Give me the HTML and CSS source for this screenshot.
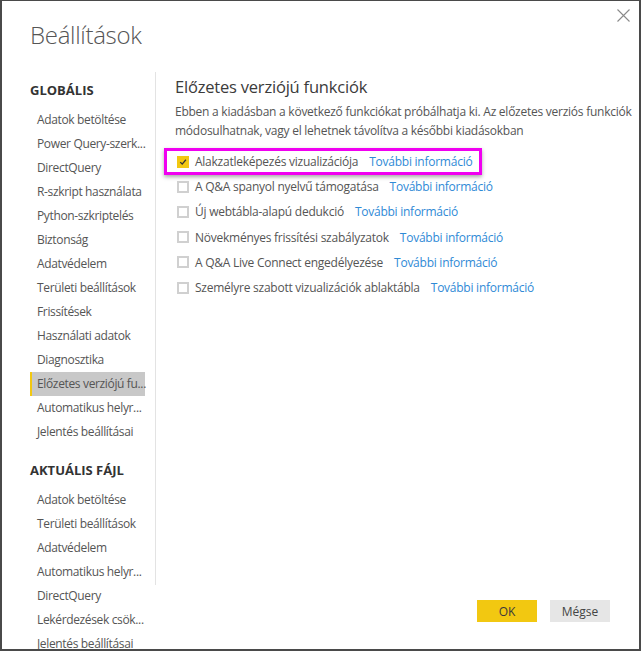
FILE: index.html
```html
<!DOCTYPE html>
<html lang="hu">
<head>
<meta charset="utf-8">
<title>Beállítások</title>
<link rel="stylesheet" href="styles.css">
</head>
<body>
<div class="dialog">
  <div class="header">
    <h1 class="title">Beállítások</h1>
    <button class="close" aria-label="Bezárás">
      <svg width="13" height="13" viewBox="0 0 13 13"><path d="M0.5 0.5 L12.5 12.5 M12.5 0.5 L0.5 12.5" stroke="#8a8a8a" stroke-width="1.1" fill="none"/></svg>
    </button>
  </div>
  <div class="main">
    <nav class="nav">
      <div class="nav-head">GLOBÁLIS</div>
      <div class="nav-item">Adatok betöltése</div>
      <div class="nav-item">Power Query-szerk...</div>
      <div class="nav-item">DirectQuery</div>
      <div class="nav-item">R-szkript használata</div>
      <div class="nav-item">Python-szkriptelés</div>
      <div class="nav-item">Biztonság</div>
      <div class="nav-item">Adatvédelem</div>
      <div class="nav-item">Területi beállítások</div>
      <div class="nav-item">Frissítések</div>
      <div class="nav-item">Használati adatok</div>
      <div class="nav-item">Diagnosztika</div>
      <div class="nav-item selected">Előzetes verziójú fu...</div>
      <div class="nav-item">Automatikus helyr...</div>
      <div class="nav-item">Jelentés beállításai</div>
      <div class="nav-head second">AKTUÁLIS FÁJL</div>
      <div class="nav-item">Adatok betöltése</div>
      <div class="nav-item">Területi beállítások</div>
      <div class="nav-item">Adatvédelem</div>
      <div class="nav-item">Automatikus helyr...</div>
      <div class="nav-item">DirectQuery</div>
      <div class="nav-item">Lekérdezések csök...</div>
      <div class="nav-item">Jelentés beállításai</div>
    </nav>
    <div class="right">
      <section class="content">
        <h2 class="content-title">Előzetes verziójú funkciók</h2>
        <p class="desc">Ebben a kiadásban a következő funkciókat próbálhatja ki. Az előzetes verziós funkciók módosulhatnak, vagy el lehetnek távolítva a későbbi kiadásokban</p>
        <div class="row">
          <span class="box checked"><svg width="10" height="10" viewBox="0 0 10 10"><path d="M1.5 5.2 L4 7.6 L8.6 2.2" stroke="#333" stroke-width="1.6" fill="none"/></svg></span>
          <span class="label">Alakzatleképezés vizualizációja</span>
          <a class="link" href="#">További információ</a>
          <span class="mark"></span>
        </div>
        <div class="row">
          <span class="box"></span>
          <span class="label">A Q&amp;A spanyol nyelvű támogatása</span>
          <a class="link" href="#">További információ</a>
        </div>
        <div class="row">
          <span class="box"></span>
          <span class="label">Új webtábla-alapú dedukció</span>
          <a class="link" href="#">További információ</a>
        </div>
        <div class="row">
          <span class="box"></span>
          <span class="label">Növekményes frissítési szabályzatok</span>
          <a class="link" href="#">További információ</a>
        </div>
        <div class="row">
          <span class="box"></span>
          <span class="label">A Q&amp;A Live Connect engedélyezése</span>
          <a class="link" href="#">További információ</a>
        </div>
        <div class="row">
          <span class="box"></span>
          <span class="label">Személyre szabott vizualizációk ablaktábla</span>
          <a class="link" href="#">További információ</a>
        </div>
      </section>
      <div class="footer">
        <button class="btn primary">OK</button>
        <button class="btn">Mégse</button>
      </div>
    </div>
  </div>
</div>
</body>
</html>
```

FILE: styles.css
```css
* { box-sizing: border-box; }
html, body { margin: 0; padding: 0; background: #fff; }
body { font-family: "Open Sans", "Noto Sans", sans-serif; color: #444; }

.dialog {
  width: 641px;
  height: 651px;
  border: 2px solid #4a4a4a;
  border-top-width: 1px;
  background: #fff;
  display: flex;
  flex-direction: column;
  overflow: hidden;
}

.header {
  height: 71px;
  flex: none;
  position: relative;
  display: flex;
  align-items: flex-start;
}
.title {
  margin: 15px 0 0 28px;
  font-size: 24px;
  font-weight: 300;
  color: #555;
  line-height: 38px;
  letter-spacing: -0.3px;
}
.close {
  position: absolute;
  right: 9px;
  top: 8px;
  border: 0;
  background: none;
  padding: 0;
  width: 13px;
  height: 13px;
  display: flex;
}

.main {
  flex: 1;
  display: flex;
  min-height: 0;
}

.nav {
  width: 153px;
  flex: none;
  padding: 6px 0 0 28px;
  overflow: hidden;
}
.nav-head {
  font-size: 13px;
  font-weight: 700;
  color: #333;
  line-height: 24px;
  margin-bottom: 6px;
}
.nav-head.second { margin-top: 14px; }
.nav-item {
  height: 24px;
  line-height: 24px;
  font-size: 12px;
  color: #555;
  padding-left: 7px;
  width: 115px;
  white-space: nowrap;
  letter-spacing: -0.35px;
}
.nav-item.selected {
  background: #c8c8c8;
  border-left: 2px solid #f2c811;
  padding-left: 5px;
}

.right {
  flex: 1;
  display: flex;
  flex-direction: column;
}
.content {
  height: 513px;
  border-left: 1px solid #e3e3e3;
  padding: 3px 0 0 19px;
}
.content-title {
  margin: 0;
  font-size: 16.5px;
  font-weight: 500;
  line-height: 24px;
  color: #3b3b3b;
  letter-spacing: -0.2px;
}
.desc {
  margin: 3px 0 9px 0;
  font-size: 12px;
  line-height: 19px;
  color: #555;
  letter-spacing: -0.25px;
}
.row {
  height: 25.2px;
  display: flex;
  align-items: center;
  font-size: 12px;
  position: relative;
  letter-spacing: -0.25px;
}
.box {
  width: 12px;
  height: 12px;
  border: 2px solid #d0d0d0;
  background: #fff;
  margin-left: 2px;
  flex: none;
  display: flex;
  align-items: center;
  justify-content: center;
}
.box.checked { background: #f2c811; border-color: #f2c811; }
.label { margin-left: 6px; color: #555; }
.link {
  margin-left: 11px;
  color: #2f8ad6;
  text-decoration: none;
}
.mark {
  position: absolute;
  left: -11px;
  top: -1px;
  width: 318px;
  height: 27px;
  border: 3px solid #f000f0;
  box-shadow: 0 2px 4px rgba(0,0,0,0.35);
  pointer-events: none;
}

.footer {
  flex: 1;
  display: flex;
  justify-content: flex-end;
  align-items: flex-start;
  gap: 13px;
  padding: 15px 29px 0 0;
}
.btn {
  width: 60px;
  height: 22px;
  border: 0;
  background: #e6e6e6;
  font-family: "Open Sans", "Noto Sans", sans-serif;
  font-size: 12px;
  color: #444;
  padding: 0;
}
.btn.primary { background: #f2c811; color: #3a3a3a; }
```
